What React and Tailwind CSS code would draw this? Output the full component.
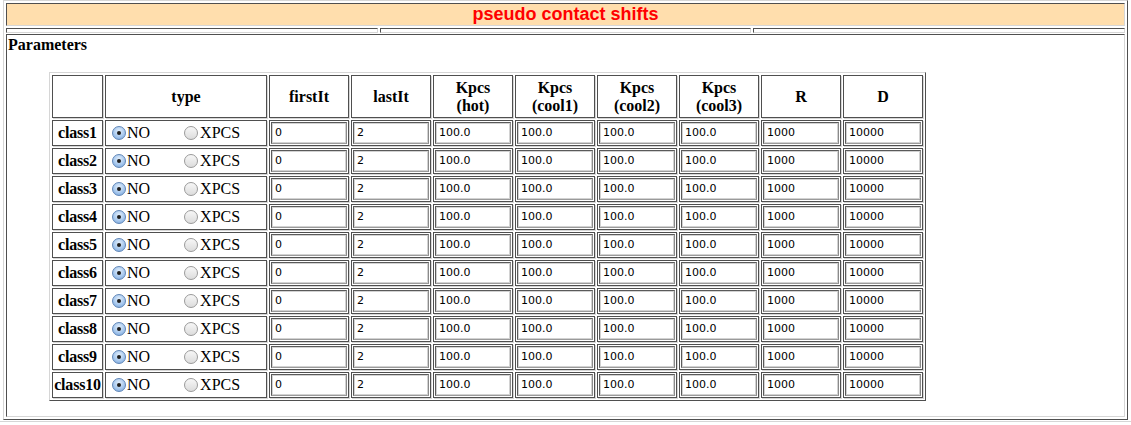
const heads = [
  ["firstIt"],
  ["lastIt"],
  ["Kpcs", "(hot)"],
  ["Kpcs", "(cool1)"],
  ["Kpcs", "(cool2)"],
  ["Kpcs", "(cool3)"],
  ["R"],
  ["D"],
];

const values = ["0", "2", "100.0", "100.0", "100.0", "100.0", "1000", "10000"];

const rows = Array.from({ length: 10 }, (_, i) => "class" + (i + 1));

const serif = "font-['Liberation_Serif','Times_New_Roman',serif]";

function Cell({ className = "", children }) {
  return (
    <div
      className={
        "border border-[#4f4f4f] shadow-[1px_1px_0_#d6d6d6] " + className
      }
    >
      {children}
    </div>
  );
}

function Radio({ checked }) {
  if (checked) {
    return (
      <span className="flex h-[14px] w-[14px] shrink-0 items-center justify-center rounded-full border border-[#5f86b8] bg-[radial-gradient(circle_at_50%_35%,#e4f0fc_0%,#a9c9ee_55%,#6f9fd8_100%)]">
        <span className="h-[4px] w-[4px] rounded-full bg-[#1e1e1e]" />
      </span>
    );
  }
  return (
    <span className="block h-[14px] w-[14px] shrink-0 rounded-full border border-[#9a9a9a] bg-[linear-gradient(#f7f7f7,#dcdcdc)]" />
  );
}

function Field({ value }) {
  return (
    <div className="flex h-[22px] w-[76px] items-center border border-[#5a5a5a] border-r-[#8a8a8a] border-b-[#9a9a9a] pl-[3px] shadow-[inset_0_0_0_1px_#d2d2d2] font-['DejaVu_Sans',sans-serif] text-[11px] text-black">
      {value}
    </div>
  );
}

export default function App() {
  return (
    <div className="h-[425px] w-[1131px] bg-white">
      <div className="ml-[3px] flex w-[1125px] flex-col border border-t-[#d6d6d6] border-l-[#d6d6d6] border-r-[#4f4f4f] border-b-[#4f4f4f] p-[2px]">
        <div className="flex h-[23px] items-center justify-center border border-t-[#4f4f4f] border-l-[#4f4f4f] border-r-[#d6d6d6] border-b-[#d6d6d6] bg-[#ffdead]">
          <span className="font-['Liberation_Sans',Arial,sans-serif] text-[18px] font-bold leading-[21px] text-[#ff0000]">
            pseudo contact shifts
          </span>
        </div>

        <div className="mt-[2px] grid h-[5px] grid-cols-3 gap-[2px]">
          <div className="border border-t-[#4f4f4f] border-l-[#4f4f4f] border-r-[#d6d6d6] border-b-[#d6d6d6]" />
          <div className="border border-t-[#4f4f4f] border-l-[#4f4f4f] border-r-[#d6d6d6] border-b-[#d6d6d6]" />
          <div className="border border-t-[#4f4f4f] border-l-[#4f4f4f] border-r-[#d6d6d6] border-b-[#d6d6d6]" />
        </div>

        <div className="mt-[1px] h-[383px] border border-t-[#4f4f4f] border-l-[#4f4f4f] border-r-[#d6d6d6] border-b-[#d6d6d6] p-[1px]">
          <div className={serif + " text-[16px] font-bold leading-[18px] text-black"}>
            Parameters
          </div>

          <div className="ml-[41px] mt-[18px] w-fit border border-t-[#d6d6d6] border-l-[#d6d6d6] border-r-[#4f4f4f] border-b-[#4f4f4f] p-[2px]">
            <div
              className={
                serif +
                " grid grid-cols-[51px_162px_repeat(8,80px)] grid-rows-[43px_repeat(10,26px)] gap-[2px] text-[16px] text-black"
              }
            >
              <Cell />
              <Cell className="flex items-center justify-center font-bold">
                type
              </Cell>
              {heads.map((h, i) => (
                <Cell
                  key={i}
                  className="flex flex-col items-center justify-center text-center font-bold leading-[18px]"
                >
                  {h.map((line) => (
                    <span key={line}>{line}</span>
                  ))}
                </Cell>
              ))}

              {rows.map((name) => [
                <Cell
                  key={name + "-n"}
                  className="flex items-center justify-center font-bold tracking-[-0.2px]"
                >
                  {name}
                </Cell>,
                <Cell key={name + "-t"} className="flex items-center">
                  <span className="ml-[6px]">
                    <Radio checked />
                  </span>
                  <span className="ml-[1px] leading-[18px]">NO</span>
                  <span className="ml-[34px]">
                    <Radio />
                  </span>
                  <span className="ml-[2px] leading-[18px]">XPCS</span>
                </Cell>,
                ...values.map((v, j) => (
                  <Cell key={name + "-" + j} className="p-[1px]">
                    <Field value={v} />
                  </Cell>
                )),
              ])}
            </div>
          </div>
        </div>
      </div>
      <div className="mt-[1px] border-t border-[#d6d6d6]" />
    </div>
  );
}
